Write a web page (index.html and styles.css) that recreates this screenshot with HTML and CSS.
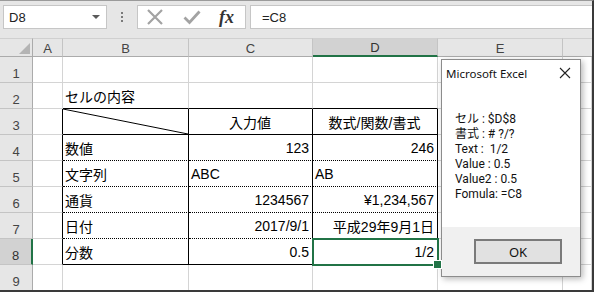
FILE: index.html
```html
<!DOCTYPE html>
<html lang="ja">
<head>
<meta charset="utf-8">
<title>Excel</title>
<link rel="stylesheet" href="styles.css">
</head>
<body>
<div class="app">
  <div class="fbar">
    <div class="namebox"><span>D8</span><span class="caret"></span></div>
    <div class="dots"><i></i><i></i><i></i></div>
    <div class="fxbox">
      <svg class="ico" width="18" height="16" viewBox="0 0 18 16"><path d="M2 1 L16 15 M16 1 L2 15" stroke="#a3a3a3" stroke-width="2.2" fill="none"/></svg>
      <svg class="ico chk" width="18" height="16" viewBox="0 0 18 16"><path d="M1.5 8.5 L6.5 13.5 L16.5 2.5" stroke="#a3a3a3" stroke-width="2.8" fill="none"/></svg>
      <span class="fx">fx</span>
    </div>
    <div class="finput">=C8</div>
  </div>

  <div class="sheet">
    <div class="hdr corner"><span class="tri"></span></div>
    <div class="hdr">A</div>
    <div class="hdr">B</div>
    <div class="hdr">C</div>
    <div class="hdr sel">D</div>
    <div class="hdr">E</div>
    <div class="hdr last"></div>

    <div class="rh">1</div><div class="c"></div><div class="c"></div><div class="c"></div><div class="c"></div><div class="c"></div><div class="c"></div>

    <div class="rh">2</div><div class="c"></div><div class="c eb">セルの内容</div><div class="c eb"></div><div class="c eb"></div><div class="c"></div><div class="c"></div>

    <div class="rh">3</div><div class="c er"></div>
    <div class="c t sb diag"><svg width="100%" height="100%" viewBox="0 0 100 100" preserveAspectRatio="none"><line x1="0" y1="0" x2="100" y2="100" stroke="#000" stroke-width="1" vector-effect="non-scaling-stroke"/></svg></div>
    <div class="c t sb ctr">入力値</div><div class="c t sb ctr">数式/関数/書式</div><div class="c"></div><div class="c"></div>

    <div class="rh">4</div><div class="c er"></div><div class="c t db">数値</div><div class="c t db num">123</div><div class="c t db num">246</div><div class="c"></div><div class="c"></div>

    <div class="rh">5</div><div class="c er"></div><div class="c t db">文字列</div><div class="c t db">ABC</div><div class="c t db">AB</div><div class="c"></div><div class="c"></div>

    <div class="rh">6</div><div class="c er"></div><div class="c t db">通貨</div><div class="c t db num">1234567</div><div class="c t db num">¥1,234,567</div><div class="c"></div><div class="c"></div>

    <div class="rh">7</div><div class="c er"></div><div class="c t db">日付</div><div class="c t db num">2017/9/1</div><div class="c t db num">平成29年9月1日</div><div class="c"></div><div class="c"></div>

    <div class="rh sel">8</div><div class="c er"></div><div class="c t sb">分数</div><div class="c t sb num">0.5</div><div class="c t sb num active">1/2</div><div class="c"></div><div class="c"></div>

    <div class="rh">9</div><div class="c"></div><div class="c"></div><div class="c"></div><div class="c"></div><div class="c"></div><div class="c"></div>
  </div>

  <div class="dialog">
    <div class="dlg-title">
      <span>Microsoft Excel</span>
      <svg class="close" width="12" height="12" viewBox="0 0 12 12"><path d="M1 1 L11 11 M11 1 L1 11" stroke="#222" stroke-width="1.1" fill="none"/></svg>
    </div>
    <div class="dlg-body">
      <div>セル : $D$8</div>
      <div>書式 : # ?/?</div>
      <div>Text :&nbsp; 1/2</div>
      <div>Value : 0.5</div>
      <div>Value2 : 0.5</div>
      <div>Fomula: =C8</div>
    </div>
    <div class="dlg-foot">
      <div class="btn">OK</div>
    </div>
  </div>
</div>
</body>
</html>
```
FILE: styles.css
```css
* { box-sizing: border-box; }
html, body { margin: 0; padding: 0; }
body { width: 594px; height: 292px; overflow: hidden; background: #fff; }

.app {
  position: relative;
  width: 594px;
  height: 292px;
  overflow: hidden;
  border-top: 1px solid #9a9a9a;
  border-right: 2px solid #3a3a3a;
  border-bottom: 2px solid #3a3a3a;
  background: #e6e6e6;
  font-family: "Liberation Sans", "Noto Sans CJK JP", sans-serif;
}

/* formula bar */
.fbar {
  display: flex;
  align-items: flex-start;
  height: 37px;
  padding: 4px 0 0 3px;
}
.namebox {
  width: 104px;
  height: 24px;
  background: #fff;
  border: 1px solid #c6c6c6;
  display: flex;
  align-items: center;
  padding-left: 5px;
  font-size: 13px;
  color: #222;
}
.caret {
  margin-left: auto;
  margin-right: 6px;
  width: 0;
  height: 0;
  border-left: 4px solid transparent;
  border-right: 4px solid transparent;
  border-top: 4px solid #5a5a5a;
}
.dots {
  width: 30px;
  height: 24px;
  display: flex;
  flex-direction: column;
  align-items: center;
  justify-content: center;
  gap: 2px;
}
.dots i { display: block; width: 2px; height: 2px; background: #7a7a7a; }
.fxbox {
  width: 109px;
  height: 24px;
  background: #fff;
  border: 1px solid #c6c6c6;
  display: flex;
  align-items: center;
  padding-left: 8px;
}
.ico { display: block; }
.chk { margin-left: 19px; }
.fx {
  margin-left: 18px;
  font-family: "Liberation Serif", serif;
  font-style: italic;
  font-weight: bold;
  font-size: 18px;
  color: #333;
  line-height: 1;
}
.finput {
  flex: 1;
  height: 24px;
  margin-left: 4px;
  background: #fff;
  border: 1px solid #c6c6c6;
  border-right: none;
  display: flex;
  align-items: center;
  padding-left: 11px;
  font-size: 13px;
  color: #222;
}

/* sheet grid */
.sheet {
  display: grid;
  grid-template-columns: 33px 30px 126px 124px 125px 125px 1fr;
  grid-template-rows: 19px repeat(9, 26px);
}
.hdr {
  background: #e6e6e6;
  border-top: 1px solid #d0d0d0;
  border-right: 1px solid #c4c4c4;
  border-bottom: 1px solid #ababab;
  display: flex;
  align-items: center;
  justify-content: center;
  padding-top: 1px;
  font-size: 13px;
  color: #444;
}
.hdr.corner {
  border-right-color: #ababab;
  justify-content: flex-end;
  align-items: flex-end;
  padding: 0 2px 2px 0;
}
.tri {
  width: 0;
  height: 0;
  border-left: 11px solid transparent;
  border-bottom: 11px solid #b4b4b4;
}
.hdr.sel {
  background: #d2d2d2;
  border-bottom: 2px solid #217346;
  color: #333;
}
.hdr.last { border-right: none; }

.rh {
  background: #e6e6e6;
  border-right: 1px solid #ababab;
  border-bottom: 1px solid #c4c4c4;
  display: flex;
  justify-content: center;
  align-items: flex-end;
  padding-bottom: 1px;
  font-size: 13px;
  color: #444;
}
.rh.sel {
  background: #d2d2d2;
  border-right: 2px solid #217346;
  color: #333;
}

.c {
  background: #fff;
  border-right: 1px solid #d4d4d4;
  border-bottom: 1px solid #d4d4d4;
  display: flex;
  align-items: center;
  padding: 1px 3px 0 2px;
  font-size: 14px;
  color: #000;
  white-space: nowrap;
}
.c.er { border-right-color: #000; }
.c.eb { border-bottom-color: #000; }
.c.t { border-right-color: #000; }
.c.sb { border-bottom: 1px solid #000; }
.c.db { border-bottom: 1px dotted #000; }
.c.ctr { justify-content: center; }
.c.num { justify-content: flex-end; }
.c.diag { padding: 0; }
.c.diag svg { display: block; }

.c.active { position: relative; }
.c.active::after {
  content: "";
  position: absolute;
  top: -1px;
  left: -1px;
  right: -2px;
  bottom: -2px;
  border: 2px solid #217346;
}
.c.active::before {
  content: "";
  position: absolute;
  right: -5px;
  bottom: -5px;
  width: 7px;
  height: 7px;
  background: #217346;
  border: 1px solid #fff;
  z-index: 2;
}

/* message box */
.dialog {
  position: absolute;
  left: 441px;
  top: 58px;
  width: 140px;
  height: 218px;
  background: #fff;
  border: 1px solid #8c8c8c;
  box-shadow: 2px 2px 6px rgba(0, 0, 0, 0.28);
  display: flex;
  flex-direction: column;
  color: #111;
}
.dlg-title {
  height: 26px;
  display: flex;
  align-items: center;
  justify-content: space-between;
  padding: 0 9px 0 4px;
  font-family: "Noto Sans", "Open Sans", sans-serif;
  font-size: 11.5px;
}
.close { display: block; }
.dlg-body {
  flex: 1;
  padding: 26px 0 0 13px;
  font-family: Roboto, "Noto Sans CJK JP", sans-serif;
  font-size: 12px;
  line-height: 15px;
  white-space: nowrap;
}
.dlg-foot {
  height: 49px;
  background: #f0f0f0;
  padding: 12px 0 0 32px;
}
.btn {
  width: 88px;
  height: 25px;
  background: #e1e1e1;
  border: 2px solid #7a7a7a;
  display: flex;
  align-items: center;
  justify-content: center;
  font-family: "Noto Sans", sans-serif;
  font-size: 13px;
  color: #111;
}
```
